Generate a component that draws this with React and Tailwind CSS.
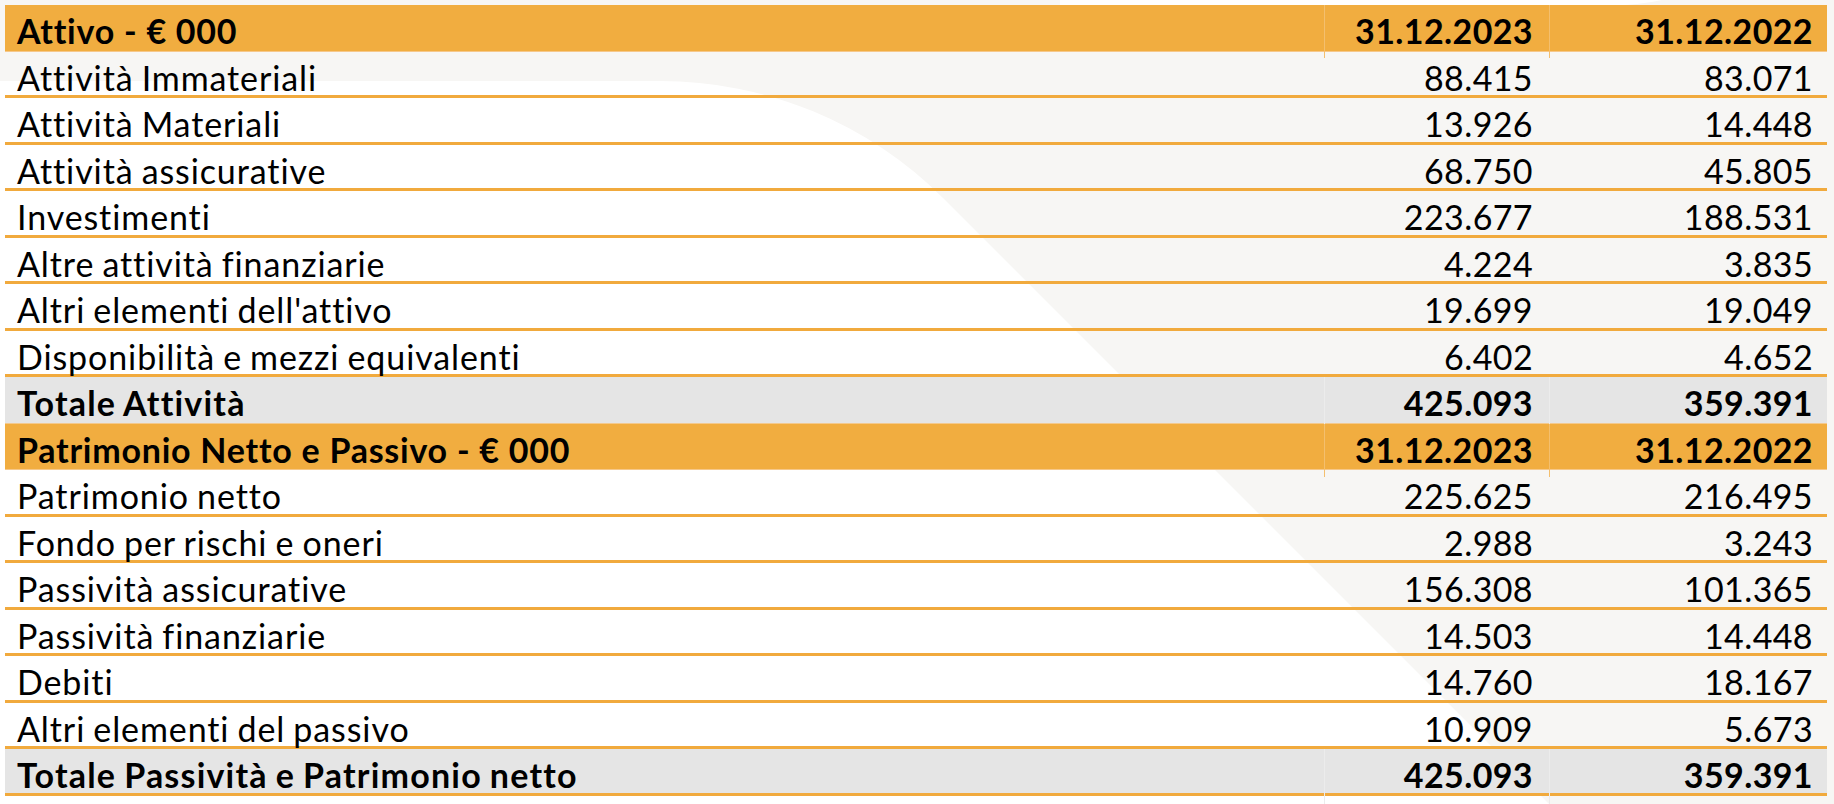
import React from 'react';

const attivo = [
  ['Attività Immateriali', '88.415', '83.071'],
  ['Attività Materiali', '13.926', '14.448'],
  ['Attività assicurative', '68.750', '45.805'],
  ['Investimenti', '223.677', '188.531'],
  ['Altre attività finanziarie', '4.224', '3.835'],
  ["Altri elementi dell'attivo", '19.699', '19.049'],
  ['Disponibilità e mezzi equivalenti', '6.402', '4.652'],
];

const passivo = [
  ['Patrimonio netto', '225.625', '216.495'],
  ['Fondo per rischi e oneri', '2.988', '3.243'],
  ['Passività assicurative', '156.308', '101.365'],
  ['Passività finanziarie', '14.503', '14.448'],
  ['Debiti', '14.760', '18.167'],
  ['Altri elementi del passivo', '10.909', '5.673'],
];

// background swoosh behind the table
function Backdrop() {
  return (
    <svg className="absolute inset-0" width="1834" height="804" viewBox="0 0 1834 804">
      <path d="M0 81 H660 A400 400 0 0 1 943 198 L1549 804 H0 Z" fill="#ffffff" />
      <path d="M1060 0 H1662 Q1640 5 1606 6 H1060 Z" fill="#ffffff" />
    </svg>
  );
}

function HeaderRow({ label }) {
  return (
    <div className="grid grid-cols-[1319px_225px_278px] h-[46.5px] bg-[#f1ad40] border-b border-[#f6c88a] font-bold">
      <div className="flex items-center pl-[12px] pb-[2px] tracking-[0.75px]">{label}</div>
      <div className="flex items-center justify-end pr-[16px] pb-[2px] border-l border-[#f4bf6e]">31.12.2023</div>
      <div className="flex items-center justify-end pr-[14px] pb-[2px] border-l border-[#f4bf6e]">31.12.2022</div>
    </div>
  );
}

function DataRow({ row }) {
  const [label, a, b] = row;
  return (
    <div className="grid grid-cols-[1319px_225px_278px] h-[46.5px] border-b-[3px] border-[#f1aa3d]">
      <div className="flex items-center pl-[12px] pb-[5px] tracking-[0.9px] [word-spacing:-1.5px]">{label}</div>
      <div className="flex items-center justify-end pr-[16px] pb-[5px]">{a}</div>
      <div className="flex items-center justify-end pr-[14px] pb-[5px]">{b}</div>
    </div>
  );
}

function TotalRow({ label, a, b, last }) {
  return (
    <div
      className={`grid grid-cols-[1319px_225px_278px] h-[46.5px] bg-[#e5e5e5] font-bold ${
        last ? 'border-b-[3px] border-[#f1aa3d]' : 'border-b border-[#f3c98e]'
      }`}
    >
      <div className="flex items-center pl-[12px] pb-[6px] tracking-[1.2px] [word-spacing:-1.5px]">{label}</div>
      <div className="flex items-center justify-end pr-[16px] pb-[6px] border-l border-[#ececec]">{a}</div>
      <div className="flex items-center justify-end pr-[14px] pb-[6px] border-l border-[#ececec]">{b}</div>
    </div>
  );
}

export default function App() {
  return (
    <div className="relative w-[1834px] h-[804px] overflow-hidden bg-[#f7f6f4]">
      <Backdrop />
      <div
        className="relative pt-[5px] pl-[5px] text-[34px] text-black tracking-[0.4px] [font-variant-ligatures:none]"
        style={{ fontFamily: 'Lato, "Open Sans", sans-serif' }}
      >
        <div className="w-[1822px]">
          <HeaderRow label="Attivo - € 000" />
          {attivo.map((r) => (
            <DataRow key={r[0]} row={r} />
          ))}
          <TotalRow label="Totale Attività" a="425.093" b="359.391" />
          <HeaderRow label="Patrimonio Netto e Passivo - € 000" />
          {passivo.map((r) => (
            <DataRow key={r[0]} row={r} />
          ))}
          <TotalRow label="Totale Passività e Patrimonio netto" a="425.093" b="359.391" last />
        </div>
      </div>
    </div>
  );
}
